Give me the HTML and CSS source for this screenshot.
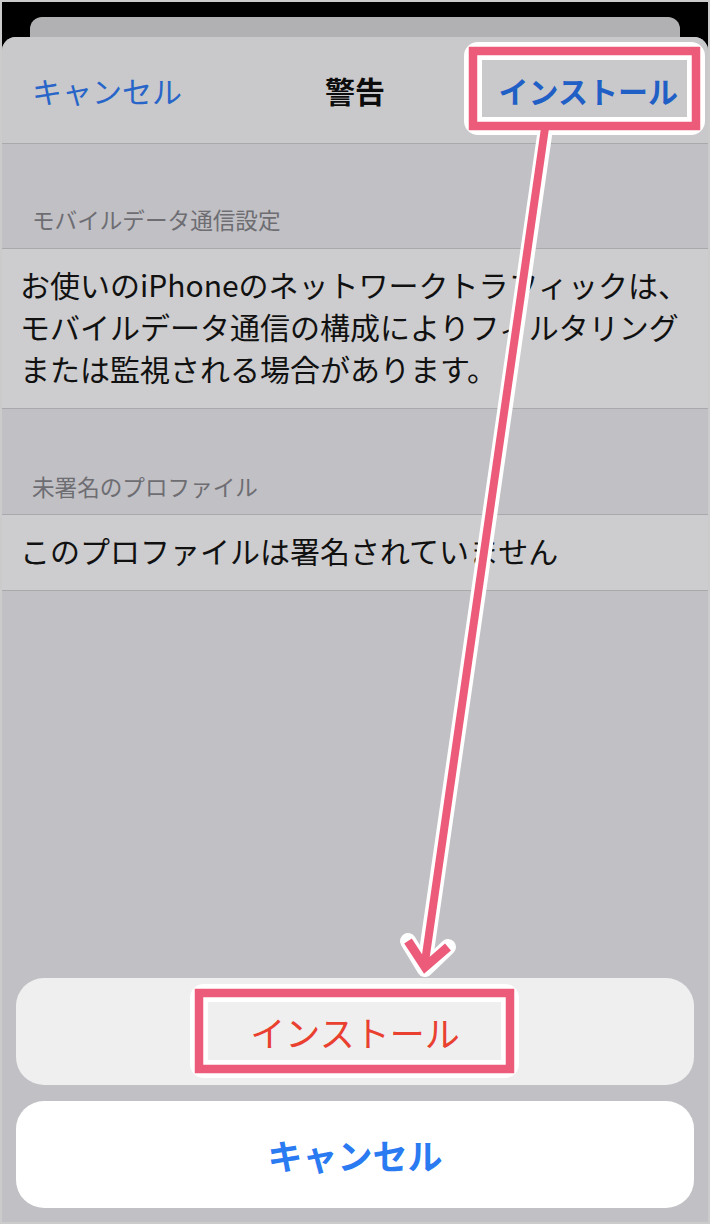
FILE: index.html
```html
<!DOCTYPE html>
<html lang="ja">
<head>
<meta charset="utf-8">
<title>警告</title>
<link rel="stylesheet" href="styles.css">
</head>
<body>
<div class="frame">
  <div class="backcard"></div>
  <div class="sheet">
    <div class="navbar">
      <span class="nav-left">キャンセル</span>
      <span class="nav-title">警告</span>
      <span class="nav-right">インストール</span>
    </div>
    <div class="section-head first">モバイルデータ通信設定</div>
    <div class="row multi">お使いのiPhoneのネットワークトラフィックは、<br>モバイルデータ通信の構成によりフィルタリング<br>または監視される場合があります。</div>
    <div class="section-head second">未署名のプロファイル</div>
    <div class="row single">このプロファイルは署名されていません</div>
    <div class="spacer"></div>
    <div class="actions">
      <div class="btn btn-install">インストール</div>
      <div class="btn btn-cancel">キャンセル</div>
    </div>
  </div>
</div>
<svg class="annot" width="710" height="1224" viewBox="0 0 710 1224" xmlns="http://www.w3.org/2000/svg">
  <g fill="none" stroke="#ffffff" stroke-linejoin="round" stroke-linecap="round">
    <line x1="545" y1="132" x2="425" y2="962" stroke-width="15"/>
    <polyline points="408,941 425,969 448,947" stroke-width="16"/>
    <rect x="473" y="51" width="223" height="75" rx="5" stroke-width="18"/>
    <rect x="199" y="993" width="311" height="76" rx="5" stroke-width="18"/>
  </g>
  <g fill="none" stroke="#ec5b79" stroke-linejoin="miter" stroke-linecap="butt">
    <line x1="545" y1="128" x2="425" y2="962" stroke-width="8"/>
    <polyline points="408,941 425,967 448,947" stroke-width="9"/>
    <rect x="473" y="51" width="223" height="75" stroke-width="8.5"/>
    <rect x="199" y="993" width="311" height="76" stroke-width="8.5"/>
  </g>
</svg>
</body>
</html>
```
FILE: styles.css
```css
html, body {
  margin: 0;
  padding: 0;
}
body {
  background: #cbcbcb;
  width: 710px;
  height: 1224px;
  overflow: hidden;
  position: relative;
  font-family: "Noto Sans CJK JP", "Noto Sans", sans-serif;
}
.frame {
  margin: 2px;
  width: 706px;
  height: 1220px;
  background: #000;
  display: flex;
  flex-direction: column;
}
.backcard {
  margin: 15px 28px 0;
  height: 20px;
  flex: none;
  background: #b1b1b3;
  border-radius: 12px 12px 0 0;
}
.sheet {
  flex: 1;
  background: #c1c0c5;
  border-radius: 14px 14px 0 0;
  display: flex;
  flex-direction: column;
  overflow: hidden;
}
.navbar {
  height: 106px;
  flex: none;
  background: #c9c9cb;
  border-bottom: 1px solid #a9a9ac;
  display: grid;
  grid-template-columns: 1fr auto 1fr;
  align-items: center;
  padding: 0 30px;
  font-size: 30px;
  line-height: 40px;
}
.nav-left {
  justify-self: start;
  color: #2765c9;
}
.nav-title {
  font-weight: bold;
  color: #0c0c0c;
}
.nav-right {
  justify-self: end;
  color: #1f5fc6;
  font-weight: bold;
}
.section-head {
  flex: none;
  box-sizing: border-box;
  display: flex;
  align-items: flex-end;
  padding: 0 30px 12px;
  font-size: 22.6px;
  line-height: 32px;
  color: #6d6d72;
}
.section-head.first {
  height: 104px;
}
.section-head.second {
  height: 105px;
  padding-bottom: 11px;
}
.row {
  flex: none;
  background: #cdcdcf;
  border-top: 1px solid #a9a9ac;
  border-bottom: 1px solid #a9a9ac;
  padding: 0 18px;
  font-size: 30px;
  line-height: 42px;
  color: #111;
  white-space: nowrap;
}
.row.multi {
  padding-top: 14px;
  padding-bottom: 19px;
}
.row.single {
  padding-top: 14px;
  padding-bottom: 19px;
}
.spacer {
  flex: 1;
}
.actions {
  flex: none;
  display: flex;
  flex-direction: column;
  gap: 16px;
  padding: 0 14px 14px;
}
.btn {
  height: 107px;
  border-radius: 28px;
  display: flex;
  align-items: center;
  justify-content: center;
  font-size: 35px;
  line-height: 48px;
}
.btn-install {
  background: #efeff0;
  color: #e9402f;
}
.btn-cancel {
  background: #ffffff;
  color: #2a7af2;
  font-weight: bold;
}
.annot {
  position: absolute;
  left: 0;
  top: 0;
  pointer-events: none;
}
```
